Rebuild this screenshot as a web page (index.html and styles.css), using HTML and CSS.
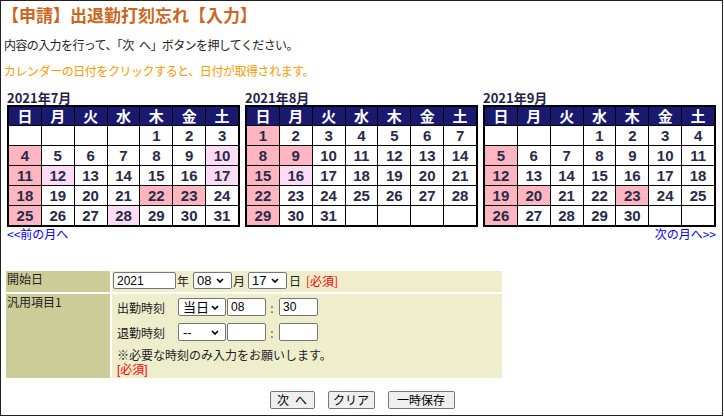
FILE: index.html
```html
<!DOCTYPE html>
<html lang="ja">
<head>
<meta charset="utf-8">
<title>【申請】出退勤打刻忘れ【入力】</title>
<link rel="stylesheet" href="styles.css">
</head>
<body>
<div class="page">
  <h1 class="title">【申請】出退勤打刻忘れ【入力】</h1>
  <p class="lead">内容の入力を行って、「次&ensp;へ」ボタンを押してください。</p>
  <p class="hint">カレンダーの日付をクリックすると、日付が取得されます。</p>

  <div class="cals">
    <div class="cal">
      <div class="cal-title">2021年7月</div>
      <div class="grid">
        <span class="h">日</span><span class="h">月</span><span class="h">火</span><span class="h">水</span><span class="h">木</span><span class="h">金</span><span class="h">土</span>
        <span></span><span></span><span></span><span></span><span>1</span><span>2</span><span>3</span>
        <span class="s">4</span><span>5</span><span>6</span><span>7</span><span>8</span><span>9</span><span class="m">10</span>
        <span class="s">11</span><span class="m">12</span><span>13</span><span>14</span><span>15</span><span>16</span><span class="m">17</span>
        <span class="s">18</span><span>19</span><span>20</span><span>21</span><span class="s">22</span><span class="s">23</span><span>24</span>
        <span class="s">25</span><span>26</span><span>27</span><span class="m">28</span><span>29</span><span>30</span><span>31</span>
      </div>
      <div class="nav"><a href="#">&lt;&lt;前の月へ</a></div>
    </div>
    <div class="cal">
      <div class="cal-title">2021年8月</div>
      <div class="grid">
        <span class="h">日</span><span class="h">月</span><span class="h">火</span><span class="h">水</span><span class="h">木</span><span class="h">金</span><span class="h">土</span>
        <span class="s">1</span><span>2</span><span>3</span><span>4</span><span>5</span><span>6</span><span>7</span>
        <span class="s">8</span><span class="s">9</span><span>10</span><span>11</span><span>12</span><span>13</span><span>14</span>
        <span class="s">15</span><span class="m">16</span><span>17</span><span>18</span><span>19</span><span>20</span><span>21</span>
        <span class="s">22</span><span>23</span><span>24</span><span>25</span><span>26</span><span>27</span><span>28</span>
        <span class="s">29</span><span>30</span><span>31</span><span></span><span></span><span></span><span></span>
      </div>
      <div class="nav"></div>
    </div>
    <div class="cal">
      <div class="cal-title">2021年9月</div>
      <div class="grid">
        <span class="h">日</span><span class="h">月</span><span class="h">火</span><span class="h">水</span><span class="h">木</span><span class="h">金</span><span class="h">土</span>
        <span></span><span></span><span></span><span>1</span><span>2</span><span>3</span><span>4</span>
        <span class="s">5</span><span>6</span><span>7</span><span>8</span><span>9</span><span>10</span><span>11</span>
        <span class="s">12</span><span>13</span><span>14</span><span>15</span><span>16</span><span>17</span><span>18</span>
        <span class="s">19</span><span class="s">20</span><span>21</span><span>22</span><span class="s">23</span><span>24</span><span>25</span>
        <span class="s">26</span><span>27</span><span>28</span><span>29</span><span>30</span><span></span><span></span>
      </div>
      <div class="nav right"><a href="#">次の月へ&gt;&gt;</a></div>
    </div>
  </div>

  <div class="form">
    <div class="lbl">開始日</div>
    <div class="val val1">
      <input class="in year" type="text" value="2021">
      <span class="unit">年</span>
      <span class="selw md">
        <select class="sel"><option>08</option></select>
        <svg class="chev" viewBox="0 0 8 5" aria-hidden="true"><path d="M1 1 L4 4 L7 1" fill="none" stroke="#000" stroke-width="1.7"/></svg>
      </span>
      <span class="unit">月</span>
      <span class="selw md md2">
        <select class="sel"><option>17</option></select>
        <svg class="chev" viewBox="0 0 8 5" aria-hidden="true"><path d="M1 1 L4 4 L7 1" fill="none" stroke="#000" stroke-width="1.7"/></svg>
      </span>
      <span class="unit u3">日</span>
      <span class="req req1">[必須]</span>
    </div>
    <div class="lbl">汎用項目1</div>
    <div class="val val2">
      <div class="trow first">
        <span class="tl">出勤時刻</span>
        <span class="selw day">
          <select class="sel"><option>当日</option></select>
          <svg class="chev" viewBox="0 0 8 5" aria-hidden="true"><path d="M1 1 L4 4 L7 1" fill="none" stroke="#000" stroke-width="1.7"/></svg>
        </span>
        <input class="in hm" type="text" value="08">
        <span class="colon">:</span>
        <input class="in hm" type="text" value="30">
      </div>
      <div class="trow">
        <span class="tl">退勤時刻</span>
        <span class="selw day">
          <select class="sel"><option>--</option></select>
          <svg class="chev" viewBox="0 0 8 5" aria-hidden="true"><path d="M1 1 L4 4 L7 1" fill="none" stroke="#000" stroke-width="1.7"/></svg>
        </span>
        <input class="in hm" type="text" value="">
        <span class="colon">:</span>
        <input class="in hm" type="text" value="">
      </div>
      <div class="note">※必要な時刻のみ入力をお願いします。</div>
      <div class="req req2">[必須]</div>
    </div>
  </div>

  <div class="btns">
    <button class="btn b1" type="button">次&ensp;へ</button>
    <button class="btn b2" type="button">クリア</button>
    <button class="btn b3" type="button">一時保存</button>
  </div>
</div>
</body>
</html>
```

FILE: styles.css
```css
* { box-sizing: border-box; }

body {
  margin: 0;
  background: #fff;
  color: #222;
  font-family: "Noto Sans CJK JP", "Noto Sans", sans-serif;
  font-size: 12px;
}

.page {
  width: 723px;
  height: 416px;
  border: 1px solid #222;
  padding: 0 0 0 1px;
  overflow: hidden;
}

.title {
  margin: 3px 0 0 0;
  font-size: 17px;
  line-height: 22px;
  font-weight: bold;
  color: #cc6622;
}

.lead {
  margin: 10px 0 0 2px;
  line-height: 18px;
  letter-spacing: -0.6px;
}

.hint {
  margin: 8px 0 0 2px;
  line-height: 18px;
  letter-spacing: -0.45px;
  color: #ff9900;
}

.cals {
  display: flex;
  gap: 5px;
  margin: 11px 0 0 5px;
}

.cal { width: 233px; }

.cal-title {
  font-size: 13px;
  font-weight: bold;
  line-height: 14px;
  color: #24244a;
}

.grid {
  display: grid;
  grid-template-columns: repeat(7, 1fr);
  grid-template-rows: 18px;
  grid-auto-rows: 19px;
  gap: 1px;
  background: #000;
  border: 2px solid #000;
}

.grid span {
  background: #fff;
  text-align: center;
  font-family: "Liberation Sans", Arial, sans-serif;
  font-weight: bold;
  font-size: 15px;
  line-height: 19px;
  color: #2a2a48;
}

.grid span.h {
  background: #191970;
  color: #fff;
  font-family: "Noto Sans CJK JP", sans-serif;
  font-size: 15px;
  line-height: 18px;
}

.grid span.s { background: #ffb6c1; }
.grid span.m { background: #ffdcf6; }

.nav {
  height: 13px;
  line-height: 13px;
  margin-top: 0;
  font-size: 12px;
}

.nav a { color: #0000ff; text-decoration: none; }
.nav.right { text-align: right; }

.form {
  display: grid;
  grid-template-columns: 104px 390px;
  grid-template-rows: 21px 84px;
  gap: 2px;
  width: 496px;
  margin: 31px 0 0 4px;
}

.lbl {
  background: #cccc99;
  padding: 1px 0 0 1px;
  line-height: 14px;
}

.val { background: #eeeecc; }

.val1 {
  display: flex;
  align-items: flex-start;
  padding: 1px 0 0 1px;
}

.val1 .unit, .val1 .req { line-height: 18px; }

.in {
  height: 17px;
  padding: 0 3px;
  border: 1px solid #767676;
  border-radius: 2px;
  background: #fff;
  font-family: "Liberation Sans", Arial, sans-serif;
  font-size: 12px;
  color: #000;
}

.year { width: 63px; }

.unit { margin-left: 1px; width: 12px; }

.selw {
  position: relative;
  display: inline-flex;
  height: 17px;
}

.sel {
  -webkit-appearance: none;
  appearance: none;
  width: 100%;
  height: 100%;
  font-family: "Liberation Sans", "Noto Sans CJK JP", sans-serif;
  font-size: 13px;
  color: #000;
  background: #fff;
  border: 1px solid #767676;
  border-radius: 2px;
  padding: 0 0 0 3px;
}

.chev {
  position: absolute;
  right: 8px;
  top: 6px;
  width: 8px;
  height: 5px;
  pointer-events: none;
}

.md { width: 39px; margin-left: 4px; }
.md2 { margin-left: 3px; }
.u3 { margin-left: 2px; }

.req { color: #ff0000; }
.req1 { margin-left: 5px; }

.val2 { padding: 4px 0 0 5px; }

.trow {
  display: flex;
  align-items: center;
  height: 18px;
}

.trow.first { margin-bottom: 7px; }

.tl { width: 61px; }

.day { width: 48px; height: 18px; }
.day .sel { padding-left: 4px; }
.day .chev { right: 7px; top: 7px; }

.hm { width: 39px; height: 18px; margin-left: 1px; }

.colon { width: 12px; text-align: center; color: #555; }

.note {
  margin-top: 8px;
  line-height: 14px;
  font-family: "Liberation Sans", "Noto Sans CJK JP", sans-serif;
}

.req2 {
  line-height: 14px;
  font-family: "Liberation Sans", "Noto Sans CJK JP", sans-serif;
}

.btns {
  display: flex;
  justify-content: center;
  gap: 13px;
  margin-top: 13px;
}

.btn {
  height: 18px;
  padding: 0;
  border: 1px solid #767676;
  border-radius: 2px;
  background: #efefef;
  font-family: "Noto Sans CJK JP", sans-serif;
  font-size: 12px;
  line-height: 16px;
  color: #000;
}

.b1 { width: 45px; }
.b2 { width: 47px; }
.b3 { width: 67px; }
```
